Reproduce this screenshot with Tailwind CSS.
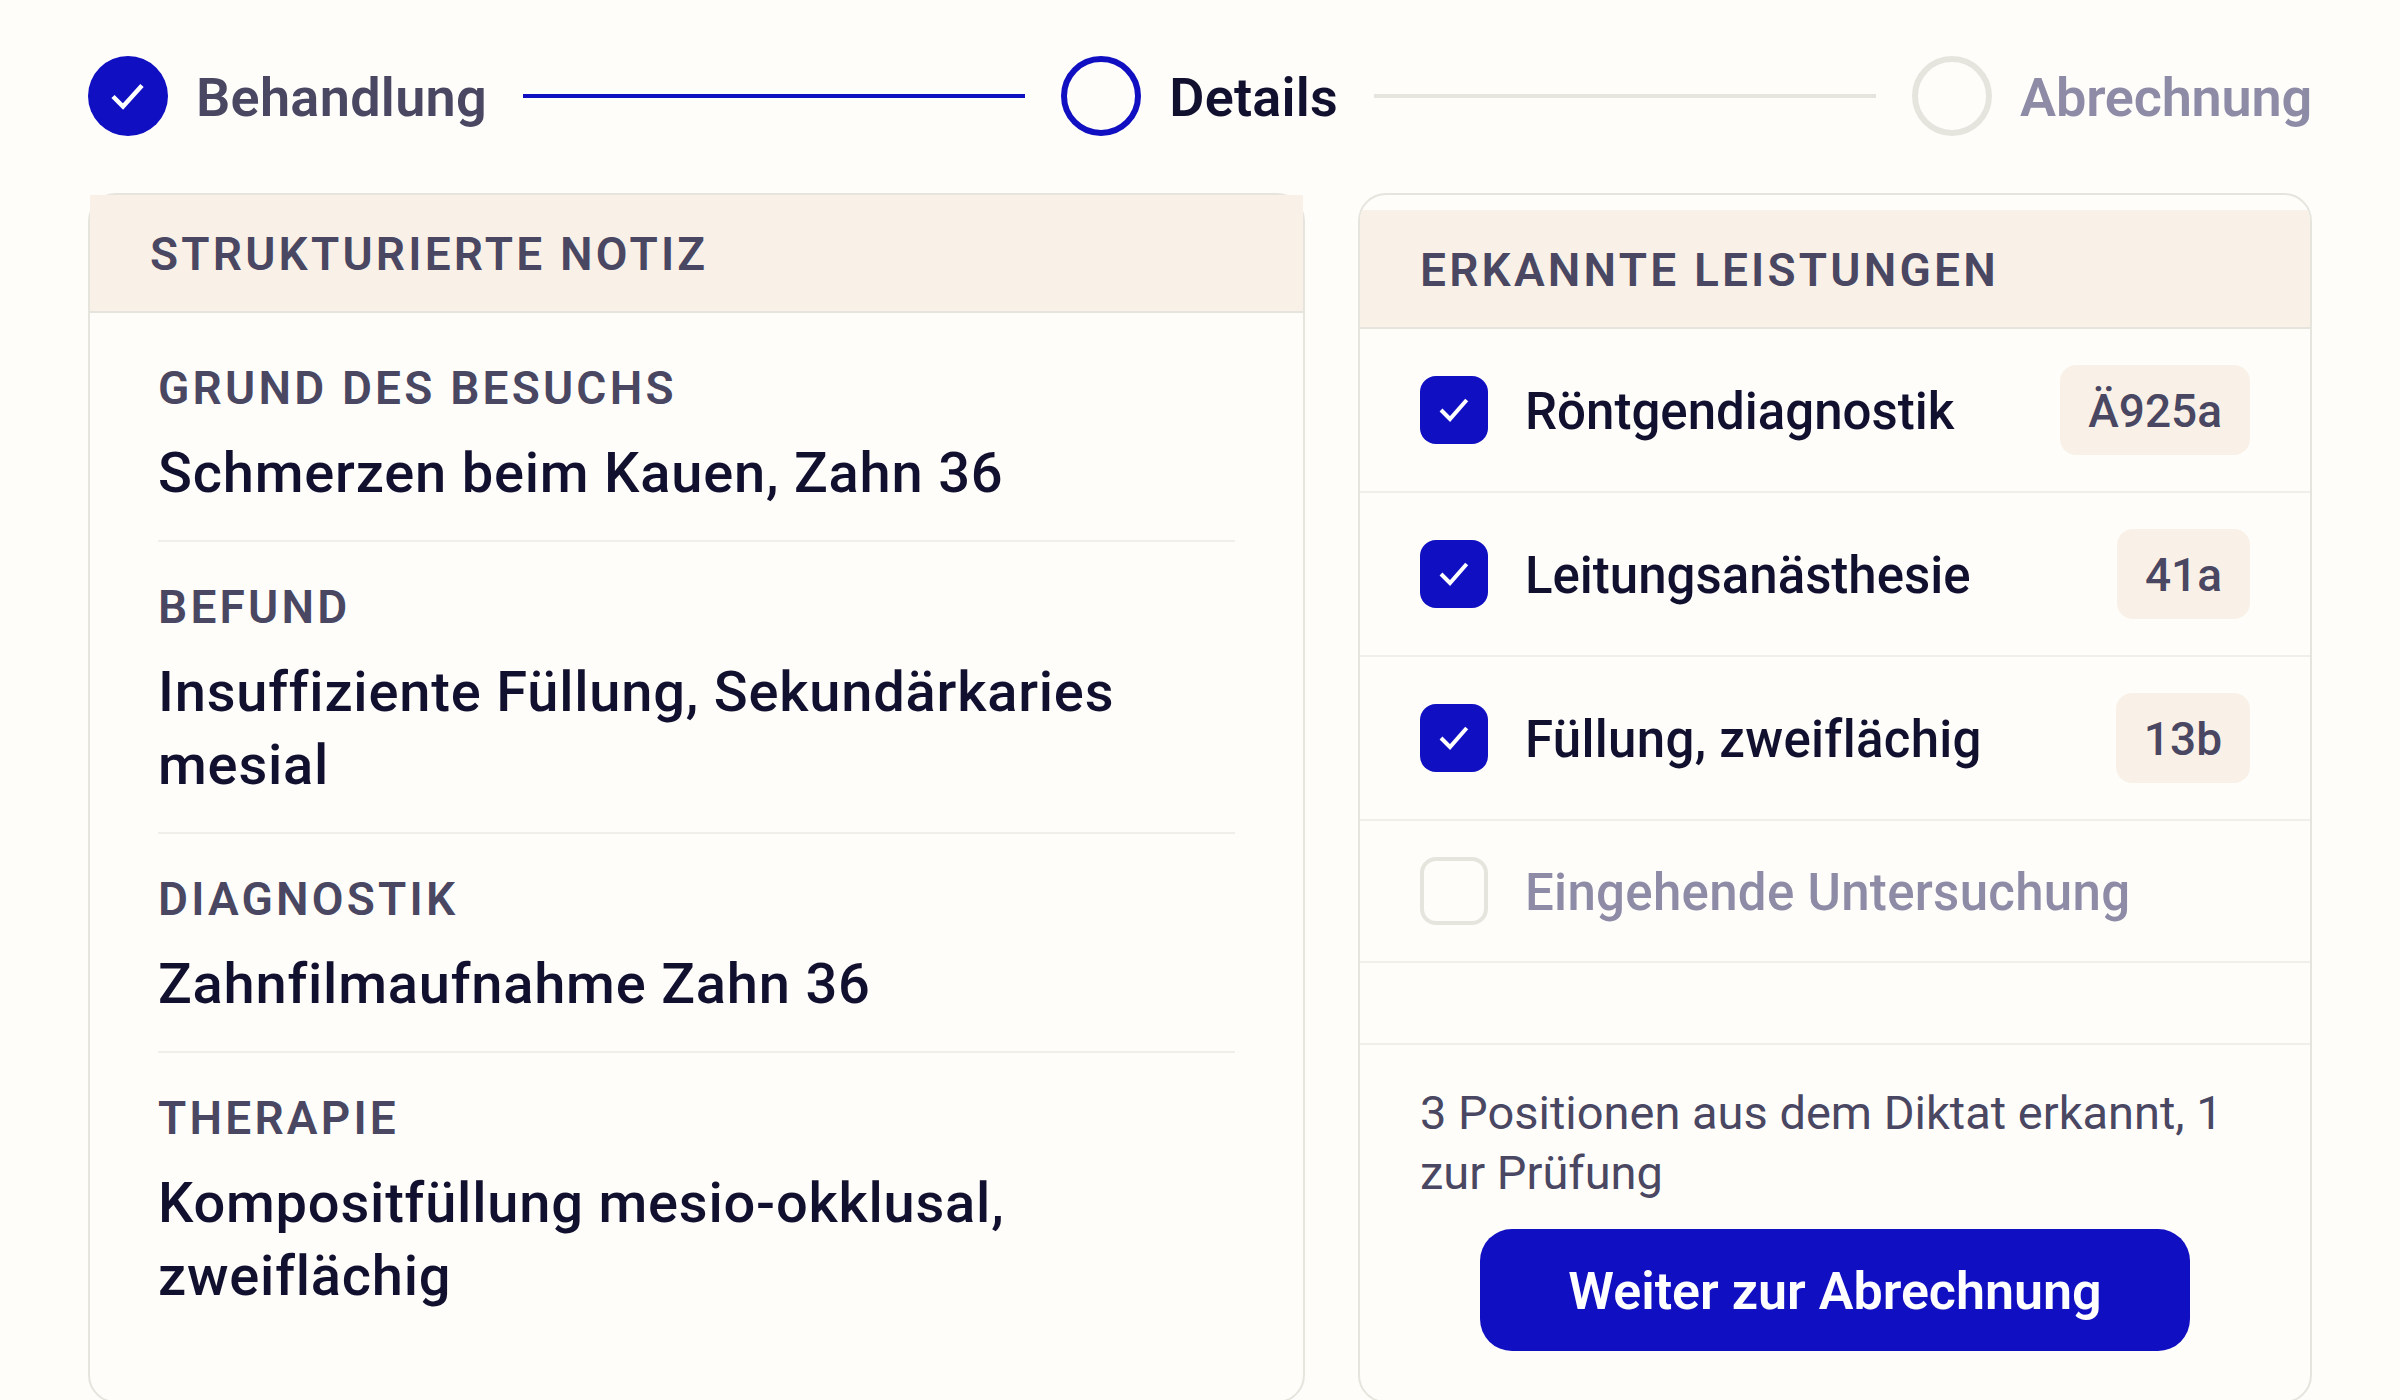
<!doctype html>
<html lang="de">
<head>
<meta charset="utf-8">
<title>Strukturierte Notiz</title>
<script src="https://cdn.jsdelivr.net/npm/@tailwindcss/browser@4"></script>
</head>
<body class="bg-[#fefdfa] font-[family-name:Roboto,sans-serif] text-[#12102f]">
<div class="w-[2400px] h-[1400px] overflow-hidden px-[88px] pt-[56px]">

	<!-- stepper -->
	<div class="flex items-center gap-[36px] h-[80px]">
		<div class="flex items-center gap-[28px]">
			<div class="w-[80px] h-[80px] rounded-full bg-[#100fc1] flex items-center justify-center">
				<svg width="40" height="40" viewBox="0 0 40 40" fill="none" stroke="white" stroke-width="4.500"><path d="M5 20.500l10 10 19-21"/></svg>
			</div>
			<span class="pt-[4px] text-[54px] tracking-[0.3px] font-semibold text-[#4a4763] leading-none">Behandlung</span>
		</div>
		<div class="flex-1 h-[4px] bg-[#100fc1]"></div>
		<div class="flex items-center gap-[28px]">
			<div class="w-[80px] h-[80px] rounded-full border-[6px] border-[#100fc1]"></div>
			<span class="pt-[4px] text-[54px] tracking-[0.2px] font-semibold leading-none">Details</span>
		</div>
		<div class="flex-1 h-[4px] bg-[#e6e5dd]"></div>
		<div class="flex items-center gap-[28px]">
			<div class="w-[80px] h-[80px] rounded-full border-[6px] border-[#e6e5dd]"></div>
			<span class="pt-[4px] text-[54px] tracking-[-0.2px] font-semibold text-[#8e8ba6] leading-none">Abrechnung</span>
		</div>
	</div>

	<div class="grid grid-cols-[1217px_954px] gap-[53px] mt-[57px]">

		<!-- left card -->
		<div class="h-[1210px] border-2 border-[#e6e5dd] rounded-[28px]">
			<div class="h-[118px] pt-[3px] bg-[#f9f1e7] border-b-2 border-[#e6e5dd] px-[60px] flex items-center">
				<h2 class="text-[46px] font-semibold tracking-[3.2px] text-[#4a4763]">STRUKTURIERTE NOTIZ</h2>
			</div>
			<div class="px-[68px] pt-[10px]">
				<div class="pt-[38px] pb-[30px] border-b-2 border-[#f0efe9]">
					<div class="text-[46px] leading-[55px] font-semibold tracking-[3.2px] text-[#4a4763]">GRUND DES BESUCHS</div>
					<div class="mt-[21px] text-[56px] leading-[73px] font-medium tracking-[0.8px]">Schmerzen beim Kauen, Zahn 36</div>
				</div>
				<div class="pt-[38px] pb-[30px] border-b-2 border-[#f0efe9]">
					<div class="text-[46px] leading-[55px] font-semibold tracking-[3.2px] text-[#4a4763]">BEFUND</div>
					<div class="mt-[21px] text-[56px] leading-[73px] font-medium tracking-[0.8px]">Insuffiziente Füllung, Sekundärkaries mesial</div>
				</div>
				<div class="pt-[38px] pb-[30px] border-b-2 border-[#f0efe9]">
					<div class="text-[46px] leading-[55px] font-semibold tracking-[3.2px] text-[#4a4763]">DIAGNOSTIK</div>
					<div class="mt-[21px] text-[56px] leading-[73px] font-medium tracking-[0.8px]">Zahnfilmaufnahme Zahn 36</div>
				</div>
				<div class="pt-[38px] pb-[30px]">
					<div class="text-[46px] leading-[55px] font-semibold tracking-[3.2px] text-[#4a4763]">THERAPIE</div>
					<div class="mt-[21px] text-[56px] leading-[73px] font-medium tracking-[0.8px]">Kompositfüllung mesio-okklusal, zweiflächig</div>
				</div>
			</div>
		</div>

		<!-- right card -->
		<div class="h-[1210px] border-2 border-[#e6e5dd] rounded-[28px] overflow-hidden pt-[15px]">
			<div class="h-[119px] pt-[3px] bg-[#f9f1e7] border-b-2 border-[#e6e5dd] px-[60px] flex items-center">
				<h2 class="text-[46px] font-semibold tracking-[3.2px] text-[#4a4763]">ERKANNTE LEISTUNGEN</h2>
			</div>
			<div class="flex items-center gap-[37px] px-[60px] py-[36px] border-b-2 border-[#f0efe9]">
				<div class="w-[68px] h-[68px] rounded-[16px] bg-[#100fc1] flex items-center justify-center">
					<svg width="34" height="34" viewBox="0 0 34 34" fill="none" stroke="white" stroke-width="4"><path d="M4 17l9 9 16.700-19"/></svg>
				</div>
				<span class="flex-1 pt-[3px] text-[51px] leading-[65px] font-medium">Röntgendiagnostik</span>
				<span class="h-[90px] pt-[3px] px-[28px] rounded-[16px] bg-[#f9f1e7] flex items-center text-[46px] font-medium text-[#4a4763]">Ä925a</span>
			</div>
			<div class="flex items-center gap-[37px] px-[60px] py-[36px] border-b-2 border-[#f0efe9]">
				<div class="w-[68px] h-[68px] rounded-[16px] bg-[#100fc1] flex items-center justify-center">
					<svg width="34" height="34" viewBox="0 0 34 34" fill="none" stroke="white" stroke-width="4"><path d="M4 17l9 9 16.700-19"/></svg>
				</div>
				<span class="flex-1 pt-[3px] text-[51px] leading-[65px] font-medium">Leitungsanästhesie</span>
				<span class="h-[90px] pt-[3px] px-[28px] rounded-[16px] bg-[#f9f1e7] flex items-center text-[46px] font-medium text-[#4a4763]">41a</span>
			</div>
			<div class="flex items-center gap-[37px] px-[60px] py-[36px] border-b-2 border-[#f0efe9]">
				<div class="w-[68px] h-[68px] rounded-[16px] bg-[#100fc1] flex items-center justify-center">
					<svg width="34" height="34" viewBox="0 0 34 34" fill="none" stroke="white" stroke-width="4"><path d="M4 17l9 9 16.700-19"/></svg>
				</div>
				<span class="flex-1 pt-[3px] text-[51px] leading-[65px] font-medium tracking-[0.3px]">Füllung, zweiflächig</span>
				<span class="h-[90px] pt-[3px] px-[28px] rounded-[16px] bg-[#f9f1e7] flex items-center text-[46px] font-medium text-[#4a4763]">13b</span>
			</div>
			<div class="flex items-center gap-[37px] px-[60px] py-[36px] border-b-2 border-[#f0efe9]">
				<div class="w-[68px] h-[68px] rounded-[16px] border-4 border-[#e6e5dd]"></div>
				<span class="flex-1 pt-[3px] text-[51px] leading-[65px] font-medium tracking-[0.3px] text-[#8e8ba6]">Eingehende Untersuchung</span>
			</div>
			<div class="h-[82px] border-b-2 border-[#f0efe9]"></div>
			<div class="px-[60px] pt-[38px]">
				<p class="text-[47px] leading-[60px] text-[#4a4763]">3 Positionen aus dem Diktat erkannt, 1 zur Prüfung</p>
				<button class="block mx-auto mt-[26px] w-[710px] h-[122px] pt-[3px] rounded-[32px] bg-[#100fc1] text-white text-[52px] font-semibold">Weiter zur Abrechnung</button>
			</div>
		</div>
	</div>
</div>
</body>
</html>
